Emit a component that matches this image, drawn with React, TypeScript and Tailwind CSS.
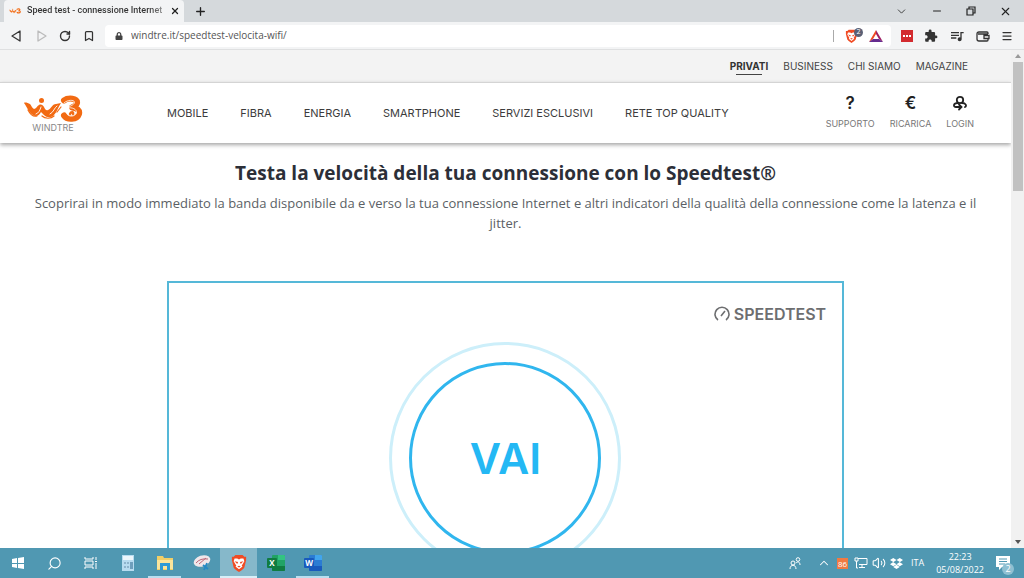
import React from "react";
import { Bookmark, ChevronDown, ChevronUp, Menu, Minus, Plus, RotateCw, Search, Volume2, X } from "lucide-react";
import { FaDropbox, FaLock } from "react-icons/fa";
import { MdExtension, MdQueueMusic } from "react-icons/md";

const ui = "font-['Open_Sans','Noto_Sans',sans-serif]";

function WindTreMark({ className }: { className: string }) {
  return (
    <svg className={className} viewBox="0 0 60 28" fill="none" strokeLinecap="round" strokeLinejoin="round" aria-hidden="true">
      <path d="M1 8C2 7 5 8 7 9C8 10 9 13 11 14C13 14 14 11 16 10C18 9 20 10 21 12C22 14 23 16 25 15C28 14 29 9 33 9L38 8C35 12 34 17 31 20C28 23 24 23 21 20L18 17C16 21 13 22 10 20C6 18 4 12 1 8Z" fill="#f26a12" />
      <path d="M5 15C7 19 10 22 14 21M19 21C22 24 28 24 31 21M34 17L38 12" stroke="#f26a12" strokeWidth="1.200" />
      <path d="M18 12C17 15 16 18 13 19M34 11C31 13 31 17 27 19" stroke="#fff" strokeWidth="0.900" />
      <circle cx="18.500" cy="5.500" r="2.500" fill="#f26a12" />
      <path d="M41 5.500C45 2.500 55 3 54 8C53 11 51 12 49 12.500C54 13 57 15 56 19C54 25 44 25 41 20.500" stroke="#f26a12" strokeWidth="6" />
      <path d="M41 8C45 4 52 5 51.500 7.500C51 10 47 11 44 13C49 12 54 14 53.500 18C52 22 45 22 44 19" stroke="#fff" strokeWidth="0.800" />
      <path d="M47 19C48 16.500 51 17 50 19" stroke="#f26a12" strokeWidth="2.400" />
    </svg>
  );
}

function BraveIcon({ className }: { className: string }) {
  return (
    <svg className={className} viewBox="0 0 18 20" aria-hidden="true">
      <path d="M5 1h8l2 2 2 0 0 4-2 8q-1 2-6 5-5-3-6-5L1 7V3l2 0z" fill="#f04b24" />
      <path d="M4 5l3 0 2 1 2-1 3 0 1 3-3 5 1 1-4 3-4-3 1-1-3-5z" fill="#fff" />
      <path d="M4 8l4 1-1 2zM14 8l-4 1 1 2zM7 14l2-1 2 1-2 1z" fill="#f04b24" />
    </svg>
  );
}

function OfficeIcon({ letter, dark, mid, light }: { letter: string; dark: string; mid: string; light: string }) {
  return (
    <svg className="h-4 w-[18px]" viewBox="0 0 18 16" aria-hidden="true">
      <rect x="5" width="13" height="16" rx="1" fill={mid} />
      <path d="M11 0h6q1 0 1 1v4h-7z" fill={light} />
      <path d="M5 11h13v4q0 1-1 1H6q-1 0-1-1z" fill={dark} />
      <rect y="3" width="10" height="10" rx="1" fill={dark} />
      <text x="5" y="11" textAnchor="middle" fontSize="8" fontWeight="700" fill="#fff" fontFamily="Open Sans, sans-serif">{letter}</text>
    </svg>
  );
}

function BrowserTabs() {
  return (
    <div className="flex h-[22px] shrink-0 items-stretch bg-[#d5d9dc]">
      <div className="ml-1 flex w-[180px] items-center rounded-t bg-[#f3f4f5] pr-1 pl-[5px]">
        <WindTreMark className="mr-1.5 h-3 w-3 shrink-0" />
        <span className="flex-1 bg-linear-to-r from-[#333] from-85% to-[#ccc] bg-clip-text font-[Roboto,sans-serif] text-[9px] font-medium whitespace-nowrap text-transparent">Speed test - connessione Internet</span>
        <button aria-label="Chiudi scheda" className="shrink-0 text-[#222]"><X size={10} strokeWidth={3} /></button>
      </div>
      <button aria-label="Nuova scheda" className="ml-2.5 text-[#222]"><Plus size={13} strokeWidth={2.5} /></button>
      <div className="ml-auto flex items-center gap-[23px] pr-3 text-[#222]">
        <button aria-label="Cerca schede"><ChevronDown size={13} strokeWidth={1.500} /></button>
        <button aria-label="Riduci"><Minus size={12} /></button>
        <button aria-label="Ripristina">
          <svg className="h-2.5 w-2.5" viewBox="0 0 10 10" fill="none" stroke="currentColor" strokeWidth="1.200"><path d="M1 3h6v6H1zM3 3V1h6v6H7" /></svg>
        </button>
        <button aria-label="Chiudi"><X size={13} strokeWidth={2} /></button>
      </div>
    </div>
  );
}

function Toolbar() {
  return (
    <div className="flex h-7 shrink-0 items-center border-b border-[#dfe0e1] bg-[#f3f4f5] pr-[11px] pl-[11px] text-[#333]">
      <div className="flex items-center gap-3">
        <button aria-label="Indietro"><svg className="h-3 w-3" viewBox="0 0 12 12" fill="none" stroke="currentColor" strokeWidth="1.300" strokeLinejoin="round"><path d="M9 1v10L1 6z" /></svg></button>
        <button aria-label="Avanti" className="text-[#bbb]"><svg className="h-3 w-3" viewBox="0 0 12 12" fill="none" stroke="currentColor" strokeWidth="1.300" strokeLinejoin="round"><path d="M3 1v10l8-5z" /></svg></button>
        <button aria-label="Ricarica"><RotateCw size={12} strokeWidth={2.8} /></button>
        <button aria-label="Segnalibro"><Bookmark size={12} strokeWidth={2.5} /></button>
      </div>
      <div className="ml-2.5 flex h-[22px] flex-1 items-center rounded bg-white pr-2 pl-2.5">
        <FaLock size={8} color="#444" />
        <input aria-label="Indirizzo" defaultValue="windtre.it/speedtest-velocita-wifi/" className="ml-2 min-w-0 flex-1 bg-transparent text-[10px] text-[#555] outline-none" />
        <span className="mr-2.5 h-3 w-px bg-[#aaa]" />
        <button aria-label="Brave Shields" className="relative mr-2.5">
          <BraveIcon className="h-3.5 w-[15px]" />
          <span className="absolute -top-px -right-1 flex h-[9px] w-[9px] items-center justify-center rounded-full bg-[#5b6075] text-[7px] text-white">2</span>
        </button>
        <button aria-label="Brave Rewards">
          <svg className="h-3 w-3.5" viewBox="0 0 14 12"><path d="M7 0 0 12 4 9 7 4z" fill="#f04b24" /><path d="M7 0l7 12-4-3-3-5z" fill="#9e1f63" /><path d="M0 12h14l-4-3H4z" fill="#642b8e" /></svg>
        </button>
      </div>
      <div className="ml-2.5 flex items-center gap-[11px]">
        <button aria-label="Estensione" className="flex h-3 w-3 items-center justify-center gap-px bg-[#d32b2f]"><i className="h-0.5 w-0.5 bg-white" /><i className="h-0.5 w-0.5 bg-white" /><i className="h-0.5 w-0.5 bg-white" /></button>
        <button aria-label="Estensioni"><MdExtension size={14} /></button>
        <button aria-label="Playlist"><MdQueueMusic size={16} /></button>
        <button aria-label="Portafoglio"><svg className="h-3 w-3.5" viewBox="0 0 14 12" fill="none" stroke="currentColor" strokeWidth="1.300"><path d="M12 4V3q0-1-1-1H3Q1 2 1 4v5q0 2 2 2h8q1 0 1-1V9M2 4h10M8 5.500h5v3H8z" /></svg></button>
        <button aria-label="Menu"><Menu size={12} strokeWidth={2.5} /></button>
      </div>
    </div>
  );
}

const sections = ["PRIVATI", "BUSINESS", "CHI SIAMO", "MAGAZINE"];
const links = ["MOBILE", "FIBRA", "ENERGIA", "SMARTPHONE", "SERVIZI ESCLUSIVI", "RETE TOP QUALITY"];

function SiteHeader() {
  return (
    <header>
      <nav aria-label="Sezioni" className="flex h-8 items-center justify-end gap-[15px] bg-[#f3f3f3] pr-[43px] text-[10px] text-[#444]">
        {sections.map((s, i) => (
          <a key={s} href="#" className={i === 0 ? "relative font-bold text-[#333] after:absolute after:inset-x-1.5 after:-bottom-px after:h-px after:bg-[#444]" : ""}>{s}</a>
        ))}
      </nav>
      <div className="relative flex h-[61px] items-center border-t border-[#d4d4d4] bg-white pr-[37px] pl-[23px] shadow-[0_2px_4px_rgba(0,0,0,0.35)]">
        <a href="#" className="flex w-[60px] flex-col items-center text-[9px] leading-[9px] text-[#888]">
          <WindTreMark className="h-7 w-[60px]" />
          WINDTRE
        </a>
        <nav aria-label="Principale" className="ml-21 flex gap-8 text-[11px] text-[#3c3c3c]">
          {links.map((l) => <a key={l} href="#">{l}</a>)}
        </nav>
        <div className="ml-auto flex gap-[15px] text-[9px] text-[#777]">
          <a href="#" className="flex flex-col items-center gap-1.5">
            <span className="flex h-4 items-center text-[17px] leading-4 font-semibold text-[#222]">?</span>SUPPORTO
          </a>
          <a href="#" className="flex flex-col items-center gap-1.5">
            <span className="flex h-4 items-center text-[17px] leading-4 font-semibold text-[#222]">€</span>RICARICA
          </a>
          <a href="#" className="flex flex-col items-center gap-1.5">
            <svg className="h-4 w-4" viewBox="0 0 16 16" fill="none" stroke="#222" strokeWidth="1.800" strokeLinecap="round"><circle cx="8" cy="5" r="3.200" /><path d="M6 8C1 8 1 12 4 12H9M7 9.500 9.500 12 7 14.500M10 8C14 8 15 11 13 12" /></svg>LOGIN
          </a>
        </div>
      </div>
    </header>
  );
}

function Speedtest() {
  return (
    <section className="mx-auto mt-12 w-[67%] border-2 border-[#55b8d8] bg-white pt-[23px] pb-16">
      <div className="flex items-center justify-end gap-1 pr-4 text-[#6d6e70]">
        <svg className="h-4 w-4" viewBox="0 0 16 16" fill="none" stroke="currentColor" strokeWidth="1.600"><path d="M4 14A7 7 0 1 1 12 14M7 10l4-5" /></svg>
        <span className="text-[16px] leading-4 font-semibold">SPEEDTEST</span>
      </div>
      <div className="mx-auto mt-5 flex h-[232px] w-[232px] items-center justify-center rounded-full border-[3px] border-[#cdeffa]">
        <button className="h-[192px] w-[192px] rounded-full border-[3px] border-[#30b6ee] text-[43px] font-semibold text-[#24b8f4]">VAI</button>
      </div>
    </section>
  );
}

function Taskbar() {
  const cell = "flex w-[37px] items-center justify-center ";
  return (
    <footer className="flex h-[30px] shrink-0 items-stretch bg-[#5098b2] text-white">
      <div className="flex items-stretch">
        <button aria-label="Start" className="flex w-9 items-center justify-center"><svg className="h-3 w-3" viewBox="0 0 12 12" fill="#fff"><path d="M0 2l5-1v5H0zM6 1l6-1v6H6zM0 7h5v4l-5-1zM6 7h6v5l-6-1z" /></svg></button>
        <button aria-label="Cerca" className="flex w-9 items-center justify-center"><Search size={15} strokeWidth={1.800} className="-scale-x-100" /></button>
        <button aria-label="Visualizzazione attività" className={cell}><svg className="h-3 w-3.5" viewBox="0 0 14 12" fill="none" stroke="#fff"><path d="M1 0v2h8V0M1 4h8v4H1zM1 12v-2h8v2M12 0v3M12 6v6M11 4.500h2" /></svg></button>
        <button aria-label="Calcolatrice" className={cell}><svg className="h-4 w-3.5" viewBox="0 0 14 16"><path d="M1 0h12v16H1z" fill="#b7dcf0" /><path d="M2 1h10v4H2z" fill="#edf6fb" /><path d="M3 7h2v2H3zM6 7h2v2H6zM3 11h2v2H3zM6 11h2v2H6z" fill="#8db4cc" /><path d="M9 7h3v7H9z" fill="#6f9fbc" /></svg></button>
        <button aria-label="Esplora file" className={cell + "relative after:absolute after:inset-x-0.5 after:bottom-0 after:h-0.5 after:bg-[#b9dff0]"}><svg className="h-4 w-[18px]" viewBox="0 0 18 16"><path d="M1 1h6l1 2h9v12H1z" fill="#f2cf67" /><path d="M1 5h16v9H1z" fill="#fbe49b" /><path d="M4 15V8h10v7h-3v-4H7v4z" fill="#2e9ad6" /></svg></button>
        <button aria-label="Strumento di cattura" className={cell}><svg className="h-4 w-[18px]" viewBox="0 0 18 16"><ellipse cx="9" cy="6" rx="8.500" ry="5.500" transform="rotate(-18 9 6)" fill="#f1e7ea" /><path d="M3 8q4-5 12-4M6 9l7-6" stroke="#bd6878" fill="none" /><path d="M10 10l5 4M14 8l-3 7" stroke="#2589c5" strokeWidth="1.800" /></svg></button>
        <button aria-label="Brave" className={cell + "relative bg-[#86b8ca] after:absolute after:inset-x-0 after:bottom-0 after:h-0.5 after:bg-[#d8eff8]"}><BraveIcon className="h-[18px] w-4" /></button>
        <button aria-label="Excel" className={cell}><OfficeIcon letter="X" dark="#107c41" mid="#21a366" light="#33c481" /></button>
        <button aria-label="Word" className={cell + "relative after:absolute after:inset-x-0.5 after:bottom-0 after:h-0.5 after:bg-[#b9dff0]"}><OfficeIcon letter="W" dark="#185abd" mid="#2b7cd3" light="#41a5ee" /></button>
      </div>
      <div className="ml-auto flex items-center pr-3 text-[9px]">
        <svg className="mr-4 h-3 w-3" viewBox="0 0 12 12" fill="none" stroke="#fff"><circle cx="4" cy="6" r="2" /><path d="M1 12c0-5 6-5 6 0" /><circle cx="9" cy="2.500" r="1.800" /><path d="M7 6c2-2 4-1 4 2" /></svg>
        <ChevronUp size={14} strokeWidth={1.800} className="mr-1.5" />
        <span className="mr-1.5 bg-[#f17a42] px-px text-[8px] leading-[11px]">86</span>
        <svg className="mr-1 h-3 w-3.5" viewBox="0 0 14 12" fill="none" stroke="#fff"><path d="M4 1.500h9v6H5M5 10.500h6M8 8v2M1 1v3h3V1zM2.500 4v7H4" /></svg>
        <Volume2 size={14} strokeWidth={1.800} className="mr-1" />
        <FaDropbox size={13} className="mr-2" />
        <span className="mr-3">ITA</span>
        <time className="mr-3 text-center leading-[13px]">22:23<br />05/08/2022</time>
        <button aria-label="Notifiche" className="relative h-4 w-4">
          <svg className="h-3.5 w-3.5" viewBox="0 0 14 14"><path d="M0 0h14v11H6l-3 3v-3H0z" fill="#fff" /><path d="M3 3h8M3 5.500h8M3 8h6" stroke="#5098b2" /></svg>
          <span className="absolute -right-0.5 -bottom-1 flex h-3 w-3 items-center justify-center rounded-full bg-[#8fc0d2] text-[9px]">2</span>
        </button>
      </div>
    </footer>
  );
}

export default function App() {
  return (
    <div className={"flex h-screen flex-col overflow-hidden bg-white " + ui}>
      <BrowserTabs />
      <Toolbar />
      <div className="flex min-h-0 flex-1">
        <main className="min-w-0 flex-1 overflow-hidden font-[Inter,sans-serif]">
          <SiteHeader />
          <div className="px-8 pt-4 text-center font-['Open_Sans',sans-serif]">
            <h1 className="text-[19px] leading-7 font-bold text-[#2c2f38]">Testa la velocità della tua connessione con lo Speedtest®</h1>
            <p className="mt-1.5 text-[13px] leading-5 text-[#5b5f65]">Scoprirai in modo immediato la banda disponibile da e verso la tua connessione Internet e altri indicatori della qualità della connessione come la latenza e il jitter.</p>
          </div>
          <Speedtest />
        </main>
        <div className="flex w-[13px] shrink-0 flex-col items-center justify-between bg-[#f1f1f1] text-[#555]" aria-hidden="true">
          <div className="flex w-full flex-col items-center">
            <svg className="my-1 h-1 w-1.5" viewBox="0 0 6 4" fill="#999"><path d="M0 4l3-4 3 4z" /></svg>
            <div className="h-[129px] w-[10px] bg-[#c1c1c1]" />
          </div>
          <svg className="my-1 h-1 w-1.5" viewBox="0 0 6 4" fill="currentColor"><path d="M0 0l3 4 3-4z" /></svg>
        </div>
      </div>
      <Taskbar />
    </div>
  );
}
